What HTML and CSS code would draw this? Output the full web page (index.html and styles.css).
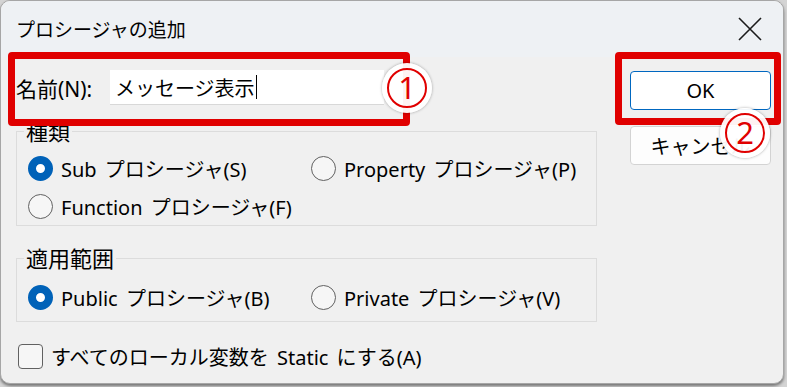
FILE: index.html
```html
<!DOCTYPE html>
<html lang="ja">
<head>
<meta charset="utf-8">
<link rel="stylesheet" href="styles.css">
</head>
<body>
<div class="win">
  <div class="titlebar">
    <span class="title">プロシージャの追加</span>
    <svg class="close" width="24" height="24" viewBox="0 0 24 24"><path d="M1 1 L23 23 M23 1 L1 23" stroke="#1b1b1b" stroke-width="1.6" fill="none"/></svg>
  </div>
  <div class="content">
    <div class="left">
      <div class="name-row">
        <span class="name-label">名前(N):</span>
        <div class="input"><span>メッセージ表示</span><span class="caret"></span></div>
      </div>
      <fieldset class="group g1">
        <legend>種類</legend>
        <div class="radios">
          <div class="radio"><span class="dot on"></span><span>Sub プロシージャ(S)</span></div>
          <div class="radio"><span class="dot"></span><span>Property プロシージャ(P)</span></div>
          <div class="radio"><span class="dot"></span><span>Function プロシージャ(F)</span></div>
        </div>
      </fieldset>
      <fieldset class="group g2">
        <legend>適用範囲</legend>
        <div class="radios">
          <div class="radio"><span class="dot on"></span><span>Public プロシージャ(B)</span></div>
          <div class="radio"><span class="dot"></span><span>Private プロシージャ(V)</span></div>
        </div>
      </fieldset>
      <div class="check"><span class="box"></span><span>すべてのローカル変数を Static にする(A)</span></div>
    </div>
    <div class="right">
      <div class="btn primary">OK</div>
      <div class="btn">キャンセル</div>
    </div>
  </div>
  <div class="mark mark1"></div>
  <div class="mark mark2"></div>
  <div class="badge badge1"><span class="ring">1</span></div>
  <div class="badge badge2"><span class="ring">2</span></div>
</div>
</body>
</html>
```
FILE: styles.css
```css
html, body {
  margin: 0;
  padding: 0;
}
body {
  width: 787px;
  height: 387px;
  overflow: hidden;
  background: #d4d4d4;
  font-family: "Noto Sans", "Noto Sans CJK JP", sans-serif;
  word-spacing: 3px;
  color: #000;
}
.win {
  position: relative;
  box-sizing: border-box;
  width: 784px;
  height: 384px;
  background: #f0f0f0;
  border: 1px solid #a6a6a6;
  border-radius: 10px;
  box-shadow: 0 2px 3px rgba(0, 0, 0, 0.45);
  overflow: hidden;
  display: flex;
  flex-direction: column;
}
.titlebar {
  height: 56px;
  flex: none;
  background: #eef1f4;
  display: flex;
  align-items: center;
  justify-content: space-between;
  padding: 0 21px 0 15px;
}
.title {
  font-size: 19px;
  line-height: 24px;
  margin-top: 2px;
}
.close {
  display: block;
}
.content {
  flex: 1;
  display: flex;
  padding: 0 11px 0 15px;
  gap: 33px;
}
.left {
  width: 581px;
  display: flex;
  flex-direction: column;
}
.name-row {
  display: flex;
  align-items: center;
  margin-top: 13px;
  height: 35px;
}
.name-label {
  font-size: 21px;
  width: 94px;
}
.input {
  width: 274px;
  height: 35px;
  box-sizing: border-box;
  background: #fff;
  border-bottom: 1px solid #d8d8d8;
  display: flex;
  align-items: center;
  padding-left: 5px;
  font-size: 20px;
}
.caret {
  display: inline-block;
  width: 1px;
  height: 24px;
  background: #000;
  margin-left: 1px;
}
.group {
  margin: 0;
  border: 1px solid #dcdcdc;
  padding: 0 0 0 11px;
  min-inline-size: 0;
}
.group legend {
  font-size: 22px;
  line-height: 20px;
  padding: 0 2px;
  margin-left: -4px;
}
.g1 {
  margin-top: 16px;
  padding-top: 9px;
  padding-bottom: 1px;
}
.g2 {
  margin-top: 22px;
  padding-top: 11px;
  padding-bottom: 6px;
}
.radios {
  display: grid;
  grid-template-columns: 283px auto;
  row-gap: 2px;
}
.radio {
  display: flex;
  align-items: center;
  height: 36px;
  gap: 8px;
  font-size: 20px;
}
.dot {
  width: 25px;
  height: 25px;
  box-sizing: border-box;
  border-radius: 50%;
  border: 1.5px solid #616161;
  background: #f6f6f6;
  flex: none;
}
.dot.on {
  border: 8px solid #0062b8;
  background: #fff;
}
.check {
  display: flex;
  align-items: center;
  gap: 8px;
  height: 26px;
  margin-top: 21px;
  margin-left: 2px;
  font-size: 20px;
}
.box {
  width: 25px;
  height: 25px;
  box-sizing: border-box;
  border: 1.5px solid #616161;
  border-radius: 4px;
  background: #f6f6f6;
  flex: none;
}
.right {
  display: flex;
  flex-direction: column;
  gap: 16px;
  padding-top: 14px;
}
.btn {
  width: 141px;
  height: 39px;
  box-sizing: border-box;
  background: #fdfdfd;
  border: 1px solid #d3d3d3;
  border-radius: 4px;
  display: flex;
  align-items: center;
  justify-content: center;
  font-size: 20px;
}
.btn.primary {
  border-color: #0067c0;
  background: #fff;
}
.mark {
  position: absolute;
  box-sizing: border-box;
  border: 7px solid #e00000;
  border-radius: 4px;
}
.mark1 {
  left: 7px;
  top: 51px;
  width: 402px;
  height: 74px;
}
.mark2 {
  left: 614px;
  top: 51px;
  width: 166px;
  height: 73px;
}
.badge {
  position: absolute;
  width: 50px;
  height: 50px;
  border-radius: 50%;
  background: rgba(255, 255, 255, 0.95);
  box-shadow: 0 0 3px rgba(0, 0, 0, 0.35);
  display: flex;
  align-items: center;
  justify-content: center;
}
.badge1 {
  left: 381px;
  top: 62px;
}
.badge2 {
  left: 719px;
  top: 107px;
}
.ring {
  width: 40px;
  height: 40px;
  box-sizing: border-box;
  border: 2.5px solid #e00000;
  border-radius: 50%;
  color: #e00000;
  font-family: "Noto Sans", "Liberation Sans", sans-serif;
  font-size: 31px;
  line-height: 35px;
  text-align: center;
}
```
